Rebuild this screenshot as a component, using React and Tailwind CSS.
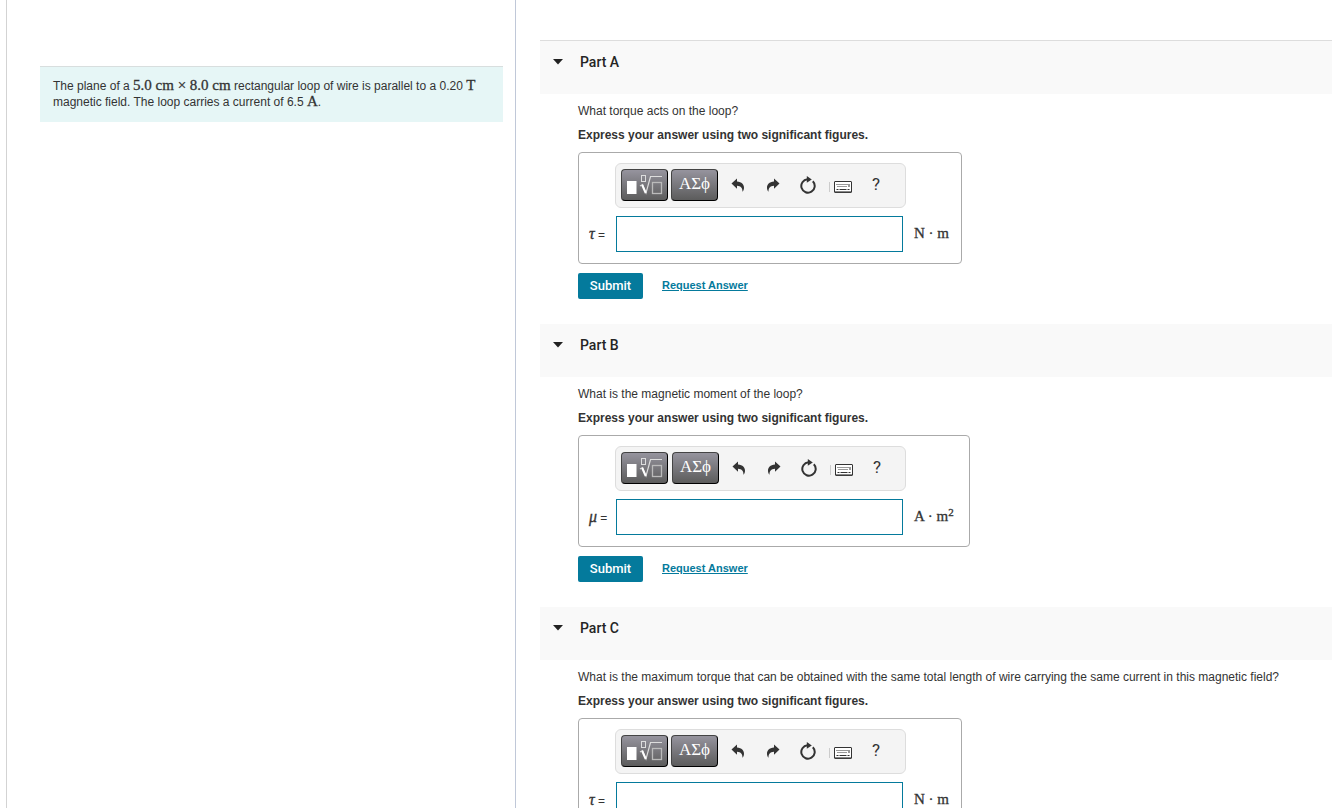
import { useState } from 'react';

const parts = [
  {
    id: 'A',
    question: 'What torque acts on the loop?',
    symbol: 'τ',
    unit: <>N · m</>,
    boxWidth: 'w-[384px]',
    toolGap: 'gap-[3px]',
  },
  {
    id: 'B',
    question: 'What is the magnetic moment of the loop?',
    symbol: 'μ',
    unit: <>A · m<sup className="top-[-5px] text-[11px]">2</sup></>,
    boxWidth: 'w-[392px]',
    toolGap: 'gap-1',
  },
  {
    id: 'C',
    question: 'What is the maximum torque that can be obtained with the same total length of wire carrying the same current in this magnetic field?',
    symbol: 'τ',
    unit: <>N · m</>,
    boxWidth: 'w-[384px]',
    toolGap: 'gap-[3px]',
  },
];

const darkButton =
  'flex h-8 w-[47px] items-center justify-center rounded-[4px] border border-t-[#444] border-l-[#444] border-r-black border-b-black bg-linear-to-b from-[#96949e] to-[#5c5c5c]';

function MathText({ children }) {
  return (
    <span className="font-['Liberation_Serif',serif] text-[15px] leading-none [-webkit-text-stroke:0.3px_#333]">{children}</span>
  );
}

function TemplateIcon() {
  return (
    <svg width="36" height="20" viewBox="0 0 36 20" fill="none" aria-hidden="true">
      <rect x="0" y="6" width="9.500" height="13" fill="#fff" />
      <rect x="14.500" y="0.500" width="4" height="6" stroke="#ddd" />
      <path d="M13 11l2.500-1.500 3.500 8.500L23.500 1.500H35" stroke="#ddd" strokeWidth="1.200" />
      <path d="M15.200 10l3.500 8" stroke="#fff" strokeWidth="2" />
      <rect x="25.500" y="7.500" width="9" height="11" stroke="#bbb" strokeWidth="1.300" />
    </svg>
  );
}

function UndoIcon() {
  return (
    <svg width="14" height="14" viewBox="0 0 14 14" fill="#333" aria-hidden="true">
      <path d="M0.5 5.5L6 0.5v3c4.800.4 7 3.200 7 6.200 0 1.700-.6 3-1.500 4.100C11.600 10.300 10 8 6 7.800v3z" />
    </svg>
  );
}

function ResetIcon() {
  return (
    <svg width="18" height="18" viewBox="0 0 18 18" fill="none" aria-hidden="true">
      <path d="M8.500 3.300A6.700 6.700 0 1 0 13.800 5.300" stroke="#333" strokeWidth="2" />
      <path d="M7.800 0l5 3.400-5 3.400z" fill="#333" />
    </svg>
  );
}

function KeyboardIcon() {
  return (
    <svg width="18" height="12" viewBox="0 0 18 12" fill="none" aria-hidden="true">
      <rect x="0.500" y="0.500" width="17" height="11" rx="0.500" stroke="#333" fill="#fff" />
      <path d="M1 10.800h16" stroke="#555" />
      <path d="M2.500 3.500h12M3.500 5.500h10" stroke="#333" strokeDasharray="1 1" />
      <path d="M15 3v3" stroke="#333" />
      <path d="M2.500 8.500h2M5.500 8.500h7M13.500 8.500h2" stroke="#333" />
    </svg>
  );
}

function Toolbar({ gap }) {
  return (
    <div className="ml-[36px] flex h-[45px] w-[291px] items-center rounded-[6px] border border-[#ddd] bg-[#f4f4f4] pb-[2px] pl-[5px]">
      <div className={`flex ${gap}`}>
        <button type="button" aria-label="Templates" className={darkButton}><TemplateIcon /></button>
        <button type="button" className={`${darkButton} pb-[2px] font-['Liberation_Serif',serif] text-[17px] text-white`}>ΑΣϕ</button>
      </div>
      <button type="button" aria-label="Undo" className="ml-[13px]"><UndoIcon /></button>
      <button type="button" aria-label="Redo" className="ml-[21px] -scale-x-100"><UndoIcon /></button>
      <button type="button" aria-label="Reset" className="ml-[19px]"><ResetIcon /></button>
      <span className="mt-1 ml-3 h-[10px] w-px bg-[#ccc]" />
      <button type="button" aria-label="Keyboard shortcuts" className="mt-1 ml-1"><KeyboardIcon /></button>
      <button type="button" aria-label="Help" className="ml-[20px] font-[Roboto,sans-serif] text-[17px]">?</button>
    </div>
  );
}

function Part({ part }) {
  const [open, setOpen] = useState(true);
  const [answer, setAnswer] = useState('');
  const inputId = `answer-${part.id}`;

  return (
    <section className="group pb-6">
      <h2 className="h-[54px] border-t border-white bg-[#f9f9f9] bg-clip-padding group-first:border-[#ddd]">
        <button
          type="button"
          aria-expanded={open}
          onClick={() => setOpen(!open)}
          className="flex h-[41px] items-center pl-[13px] font-[Roboto,sans-serif] text-sm font-medium text-[#252525]"
        >
          <svg width="10" height="6" viewBox="0 0 10 6" className="mr-[17px]" aria-hidden="true">
            <path d="M0 0h10L5 5.500z" fill="#222" />
          </svg>
          Part {part.id}
        </button>
      </h2>

      {open && (
        <div className="pt-[9px] pl-[38px]">
          <p className="text-xs">{part.question}</p>
          <p className="mt-2 text-xs font-bold">Express your answer using two significant figures.</p>

          {/* Answer box */}
          <div className={`mt-[9px] h-[112px] rounded-[4px] border border-[#aaa] pt-[10px] ${part.boxWidth}`}>
            <Toolbar gap={part.toolGap} />
            <div className="mt-2 flex items-center">
              <label htmlFor={inputId} className="w-[37px] pl-[10px] text-xs whitespace-nowrap">
                <i className="font-['Liberation_Serif',serif] text-base leading-none [-webkit-text-stroke:0.3px_#333]">{part.symbol}</i> =
              </label>
              <input
                id={inputId}
                type="text"
                value={answer}
                onChange={(e) => setAnswer(e.target.value)}
                className="h-9 w-[287px] border border-[#047a9c] bg-white px-2 text-base outline-none"
              />
              <span className="ml-[11px] pb-[2px]"><MathText>{part.unit}</MathText></span>
            </div>
          </div>

          <div className="mt-[9px] flex items-center">
            <button type="button" className="h-[26px] w-[65px] rounded-[2px] bg-[#047a9c] pb-px font-[Roboto,sans-serif] text-[13px] font-medium text-white">
              Submit
            </button>
            <a href="#request" className="ml-[19px] pb-[2px] text-[11px] font-bold text-[#047a9c] underline">Request Answer</a>
          </div>
        </div>
      )}
    </section>
  );
}

export default function App() {
  return (
    <div className="flex min-h-screen bg-white font-['Liberation_Sans',Arial,sans-serif] text-[#333]">
      {/* Problem statement */}
      <aside className="ml-[6px] w-[510px] shrink-0 border-l border-l-[#d3d3d3] border-r border-r-[#c0c8d8] pt-[66px] pr-3 pl-[33px]">
        <div className="border-t border-[#d8dede] bg-[#e6f6f6] pt-[11px] pr-3 pb-3 pl-[13px] text-xs leading-4">
          <p>
            The plane of a <MathText>5.0 cm × 8.0 cm</MathText> rectangular loop of wire is parallel to a 0.20 <MathText>T</MathText> magnetic field. The loop carries a current of 6.5 <MathText>A</MathText>.
          </p>
        </div>
      </aside>

      {/* Parts */}
      <main className="min-w-0 flex-1 pt-10 pl-6">
        {parts.map((part) => (
          <Part key={part.id} part={part} />
        ))}
      </main>
    </div>
  );
}
